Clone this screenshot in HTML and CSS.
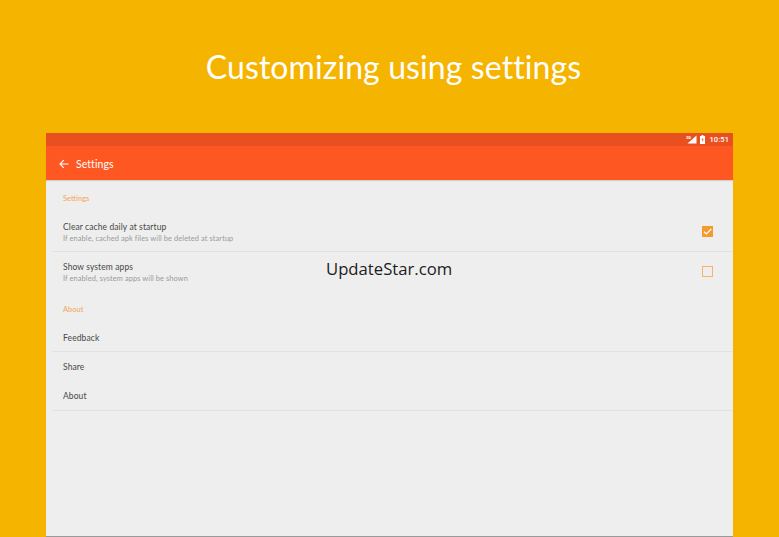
FILE: index.html
```html
<!DOCTYPE html>
<html lang="en">
<head>
<meta charset="utf-8">
<title>Customizing using settings</title>
<link rel="stylesheet" href="styles.css">
</head>
<body>
<main class="page">
  <h1 class="headline">Customizing using settings</h1>
  <section class="device">
    <div class="statusbar">
      <svg class="signal" width="12" height="9" viewBox="0 0 12 9"><path d="M10.5 0.5V8.5H1.5Z" fill="#fff"/><text x="0" y="4" class="net">3G</text></svg>
      <svg class="battery" width="5" height="9" viewBox="0 0 6 9" preserveAspectRatio="none"><path d="M2 0h2v1h2v8H0V1h2z" fill="#fff"/><path d="M3.3 2.5 1.8 5h1v2l1.4-2.7h-1z" fill="#e8501f"/></svg>
      <span class="clock">10:51</span>
    </div>
    <header class="toolbar">
      <svg class="back" width="10" height="10" viewBox="0 0 10 10"><path d="M9.5 5H1.2M4.8 1.2 1 5l3.8 3.8" fill="none" stroke="#fff" stroke-width="1.1"/></svg>
      <span class="toolbar-title">Settings</span>
    </header>
    <div class="content">
      <h2 class="group group-first">Settings</h2>
      <div class="row row-double row-line">
        <div class="row-text">
          <div class="row-title">Clear cache daily at startup</div>
          <div class="row-sub">If enable, cached apk files will be deleted at startup</div>
        </div>
        <span class="check check-on"><svg width="10" height="10" viewBox="0 0 10 10"><path d="M1.8 5.2 4 7.2 8.4 2.8" fill="none" stroke="#fff" stroke-width="1.2"/></svg></span>
      </div>
      <div class="row row-double">
        <div class="row-text">
          <div class="row-title">Show system apps</div>
          <div class="row-sub">If enabled, system apps will be shown</div>
        </div>
        <span class="check"></span>
      </div>
      <h2 class="group group-about">About</h2>
      <div class="row row-single row-line"><div class="row-text">
        <div class="row-title">Feedback</div></div></div>
      <div class="row row-single"><div class="row-text">
        <div class="row-title">Share</div></div></div>
      <div class="row row-single row-last row-line"><div class="row-text">
        <div class="row-title">About</div></div></div>
    </div>
    <div class="watermark">UpdateStar.com</div>
  </section>
</main>
</body>
</html>
```
FILE: styles.css
```css
* { box-sizing: border-box; }
html, body { margin: 0; height: 100%; }
body { background: #f5b400; overflow: hidden; font-family: "Lato", "Liberation Sans", sans-serif; }
.page { width: 779px; height: 537px; padding: 0 46px; display: flex; flex-direction: column; }
.headline { margin: 0; height: 133px; padding: 46px 0 0 8px; text-align: center; color: #fff; font-size: 32px; line-height: 42px; font-weight: 400; letter-spacing: 0.1px; }
.device { position: relative; flex: 1; width: 687px; display: flex; flex-direction: column; background: #eeeeee; border-bottom: 1px solid #9a9a9a; }
.statusbar { height: 13px; background: #e8501f; display: flex; align-items: center; justify-content: flex-end; padding-right: 4px; gap: 2px; }
.net { font: 700 4px "Roboto", sans-serif; fill: #fff; }
.clock { font: 500 7.5px/13px "Roboto", sans-serif; color: #fff; margin-left: 2px; letter-spacing: 0.1px; }
.toolbar { height: 34px; background: #ff5722; display: flex; align-items: center; padding-left: 13px; padding-top: 1px; box-shadow: 0 1px 1px rgba(0,0,0,0.12); position: relative; }
.toolbar-title { margin-left: 7px; color: #fff; font-size: 10.5px; letter-spacing: 0.05px; }
.content { flex: 1; padding: 0 0 0 6px; }
.group { margin: 0; padding-left: 11px; font-size: 7.5px; font-weight: 400; color: #f5a55c; line-height: 10px; }
.group-first { padding-top: 14px; height: 33px; }
.group-about { padding-top: 14px; height: 32px; }
.row { display: flex; align-items: center; justify-content: space-between; padding: 0 20px 0 11px; }
.row-double { height: 39px; }
.row-single { height: 29px; }
.row-last { height: 30px; }
.row-line { border-bottom: 1px solid #e2e2e2; }
.row-title { font-size: 8.5px; line-height: 11px; color: #484848; letter-spacing: 0.1px; }
.row-sub { font-size: 7.4px; line-height: 11px; color: #9a9a9a; letter-spacing: 0.1px; }
.row-text { margin-top: 2px; }
.check { width: 11px; height: 11px; border: 1px solid #f9b26a; display: flex; margin-top: -1px; }
.check-on { background: #f79a2c; border-color: #f79a2c; }
.check-on svg { margin: -1px; flex: none; width: 11px; height: 11px; }
.watermark { position: absolute; left: 280px; top: 124px; font-family: "Open Sans", sans-serif; font-size: 16.7px; line-height: 23px; color: #1c1c1c; }
```
